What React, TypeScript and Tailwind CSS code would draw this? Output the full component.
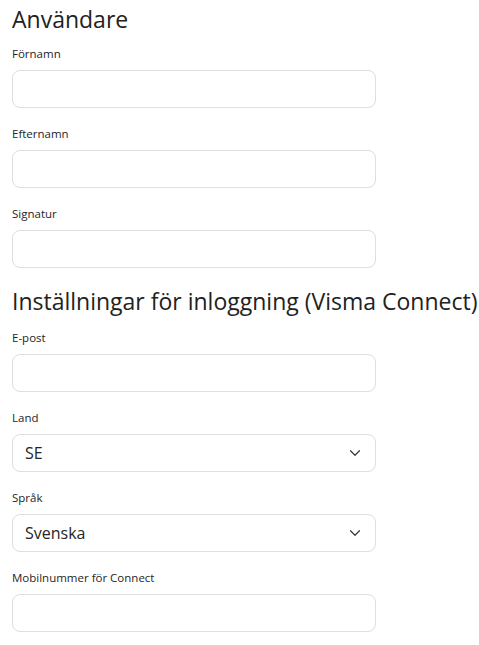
import { ChevronDown } from "lucide-react";

const font = { fontFamily: '"Segoe UI", "Open Sans", sans-serif' };

type FieldProps = { label: string; value?: string; select?: boolean };

const Field = ({ label, value, select }: FieldProps) => (
  <div className="mb-[17px]">
    <label className="block text-[11.5px] leading-[18px] text-[#252526] mb-[7px]">
      {label}
    </label>
    {select ? (
      <div className="w-[364px] h-[38px] border border-[#dedee3] rounded-lg flex items-center justify-between pl-[12px] pr-[11px] text-[16px] text-[#252526]">
        <span>{value}</span>
        <ChevronDown size={18} strokeWidth={1.6} className="text-[#3a3a3c]" />
      </div>
    ) : (
      <input
        type="text"
        className="block w-[364px] h-[38px] border border-[#dedee3] rounded-lg outline-0 px-3 text-[16px]"
      />
    )}
  </div>
);

const App = () => {
  return (
    <div className="px-3 pt-[3px] bg-white min-h-screen" style={font}>
      <h1 className="text-[23px] leading-[32px] text-[#222] mb-[10px]">
        Användare
      </h1>
      <Field label="Förnamn" />
      <Field label="Efternamn" />
      <Field label="Signatur" />
      <h2 className="text-[23px] leading-[32px] text-[#222] mt-[5px] mb-[12px] whitespace-nowrap">
        Inställningar för inloggning (Visma Connect)
      </h2>
      <Field label="E-post" />
      <Field label="Land" value="SE" select />
      <Field label="Språk" value="Svenska" select />
      <Field label="Mobilnummer för Connect" />
    </div>
  );
};

export default App;
